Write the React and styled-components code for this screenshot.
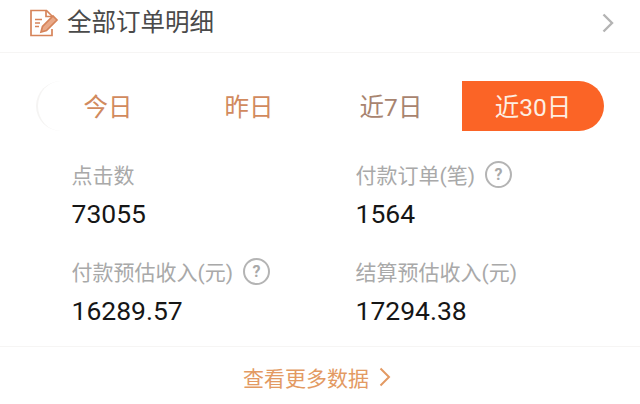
import styled, { createGlobalStyle } from 'styled-components';

const GlobalStyle = createGlobalStyle`
  html, body {
    margin: 0;
    padding: 0;
    background: #fff;
  }
  body {
    font-family: Roboto, "Noto Sans CJK SC", sans-serif;
  }
`;

const Page = styled.div`
  width: 640px;
  height: 404px;
  overflow: hidden;
  background: #fff;
`;

const Header = styled.div`
  display: flex;
  align-items: center;
  height: 53px;
  padding: 0 26px 6px 30px;
  box-sizing: border-box;
  border-bottom: 1px solid #f6f5f4;
`;

const HeaderTitle = styled.div`
  margin-left: 8px;
  flex: 1;
  font-size: 24.5px;
  line-height: 32px;
  color: #4a4a4a;
`;

const Tabs = styled.div`
  display: grid;
  grid-template-columns: repeat(4, 142px);
  width: 568px;
  height: 50px;
  margin: 28px 0 0 36px;
`;

const Tab = styled.div`
  display: flex;
  align-items: center;
  justify-content: center;
  padding-bottom: 2px;
  box-sizing: border-box;
  font-size: 24.5px;
  color: ${({ $active, $muted }) => ($active ? '#fdeee2' : $muted ? '#a8846f' : '#d18a5e')};
  background: ${({ $active }) => ($active ? '#fb6426' : 'transparent')};
  border-radius: ${({ $active }) => ($active ? '0 25px 25px 0' : '25px 0 0 25px')};
  border-left: ${({ $first }) => ($first ? '2px solid #f5f4f3' : 'none')};
`;

const Stats = styled.div`
  display: grid;
  grid-template-columns: 284px 1fr;
  grid-auto-rows: 97px;
  padding: 28px 0 0 71.5px;
  height: 216px;
  box-sizing: border-box;
  border-bottom: 1px solid #f6f5f4;
`;

const Stat = styled.div`
  display: flex;
  flex-direction: column;
`;

const Label = styled.div`
  display: flex;
  align-items: center;
  height: 30px;
  font-size: 21px;
  color: #a9a9a9;
`;

const Help = styled.span`
  display: flex;
  align-items: center;
  justify-content: center;
  width: 27px;
  height: 27px;
  margin-left: 10px;
  box-sizing: border-box;
  border: 2px solid #b4b4b4;
  border-radius: 50%;
  font-size: 16px;
  font-weight: 700;
  color: #a9a9a9;
`;

const Value = styled.div`
  margin-top: 9px;
  font-size: 26.5px;
  line-height: 32px;
  color: #161616;
`;

const More = styled.div`
  display: flex;
  align-items: center;
  justify-content: center;
  height: 64px;
  padding: 0 6px 4px 0;
  box-sizing: border-box;
  font-size: 21px;
  color: #e39a63;
`;

const MoreArrow = styled.svg`
  margin-left: 10px;
`;

const DocIcon = () => (
  <svg width="29" height="28" viewBox="0 0 29 28" fill="none" stroke="#d6845a" strokeWidth="1.7">
    <path d="M22 12V7L16.500 1.500H1V26.500H22V20" />
    <path d="M16 1.500V7.500H22" />
    <path d="M5 10.500H12M5 14H10M5 17.500H9" />
    <path d="M11 23L12.500 17.500L23 7L27 11L16.500 21.500Z" fill="#e9a988" />
  </svg>
);

const stats = [
  { label: '点击数', value: '73055' },
  { label: '付款订单(笔)', value: '1564', help: true },
  { label: '付款预估收入(元)', value: '16289.57', help: true },
  { label: '结算预估收入(元)', value: '17294.38' },
];

export default function App() {
  return (
    <Page>
      <GlobalStyle />
      <Header>
        <DocIcon />
        <HeaderTitle>全部订单明细</HeaderTitle>
        <svg width="12" height="20" viewBox="0 0 12 20" fill="none" stroke="#b4b4b4" strokeWidth="2.4">
          <path d="M1.500 1.500L10 10L1.500 18.500" />
        </svg>
      </Header>
      <Tabs>
        <Tab $first>今日</Tab>
        <Tab>昨日</Tab>
        <Tab $muted>近7日</Tab>
        <Tab $active>近30日</Tab>
      </Tabs>
      <Stats>
        {stats.map((item) => (
          <Stat key={item.label}>
            <Label>
              {item.label}
              {item.help && <Help>?</Help>}
            </Label>
            <Value>{item.value}</Value>
          </Stat>
        ))}
      </Stats>
      <More>
        查看更多数据
        <MoreArrow width="12" height="20" viewBox="0 0 12 20" fill="none" stroke="#e39a63" strokeWidth="2">
          <path d="M1.500 1.500L10 10L1.500 18.500" />
        </MoreArrow>
      </More>
    </Page>
  );
}
